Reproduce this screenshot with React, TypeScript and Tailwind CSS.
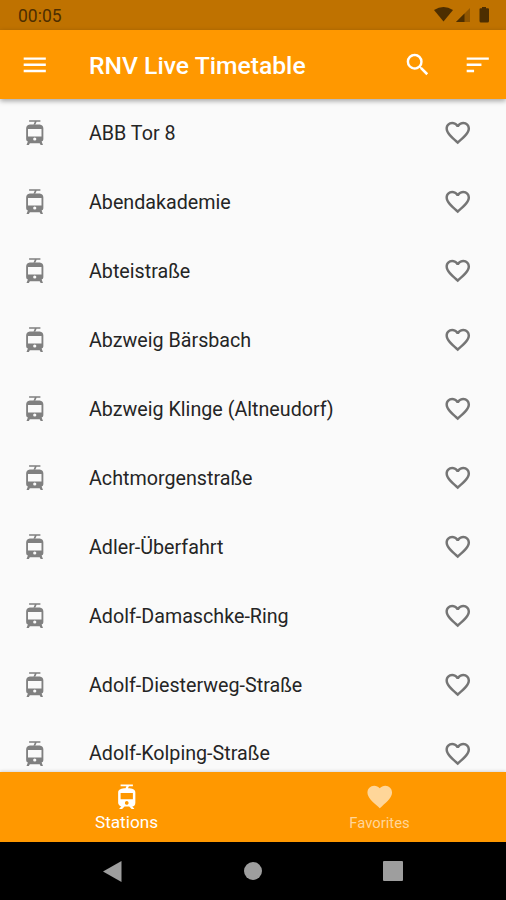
import { useState } from 'react';
import clsx from 'clsx';
import { MdFavorite, MdFavoriteBorder, MdMenu, MdSearch, MdSort, MdTram } from 'react-icons/md';

const stations = [
  'ABB Tor 8',
  'Abendakademie',
  'Abteistraße',
  'Abzweig Bärsbach',
  'Abzweig Klinge (Altneudorf)',
  'Achtmorgenstraße',
  'Adler-Überfahrt',
  'Adolf-Damaschke-Ring',
  'Adolf-Diesterweg-Straße',
  'Adolf-Kolping-Straße',
];

function StatusBar() {
  return (
    <div className="flex h-[30px] shrink-0 items-center justify-between bg-[#bf7200] pr-4 pl-[18px] text-[#4d2e00]">
      <span className="pt-[3px] text-[17.5px] leading-none">00:05</span>
      <svg width="56" height="16" viewBox="0 0 56 16" fill="currentColor">
        <path d="M0 3Q9.5-3 19 3L9.5 14.5Z" />
        <path d="M22 15 36 1v14Z" opacity="0.4" />
        <path d="M22 15 30.5 6.5V15Z" />
        <path d="M48 1.2V0h4v1.2h2q1 0 1 1V14q0 1.5-1.5 1.5h-6.5Q45.5 15.5 45.5 14V2.2q0-1 1-1Z" />
      </svg>
    </div>
  );
}

// Tram front with a wide windscreen
function TramIcon({ className }: { className?: string }) {
  return (
    <svg viewBox="0 0 24 24" fill="currentColor" className={className}>
      <path d="M7.4 1.9h9.2v1.2h-3.1l-1.1 2.4h-1.5l1.1-2.4H7.4Z" />
      <path
        fillRule="evenodd"
        d="M8 5.2h8q3 .3 3 3.3v8.7q0 1.500-1.400 1.900l1.100 2.900h-1.900l-.8-1.500H8l-.8 1.500H5.300l1.100-2.900Q5 18.700 5 17.200V8.500q0-3 3-3.300ZM6.500 9v6h11V9ZM12 15.800a1.300 1.300 0 1 0 0 2.600 1.300 1.300 0 1 0 0-2.600Z"
      />
    </svg>
  );
}

function StationRow({ name }: { name: string }) {
  return (
    <li className="flex h-[68.9px] shrink-0 items-center pr-[34px] pl-5">
      <TramIcon className="size-[29.5px] text-[#808080]" />
      <span className="ml-[39.5px] flex-1 pt-[2px] text-[19.7px] leading-none text-[#252525]">{name}</span>
      <button aria-label={`Add ${name} to favorites`}>
        <MdFavoriteBorder className="size-[29.5px] text-[#757575]" />
      </button>
    </li>
  );
}

export default function App() {
  const [tab, setTab] = useState<'stations' | 'favorites'>('stations');

  return (
    <div className="flex h-[900px] w-[506px] flex-col overflow-hidden bg-[#fafafa] font-['Roboto',sans-serif]">
      <StatusBar />
      <header className="z-10 flex h-[68.5px] shrink-0 items-center bg-[#ff9800] pr-[14px] pl-5 text-white shadow-[0_2px_5px_rgba(0,0,0,0.35)]">
        <MdMenu className="size-[29.5px]" />
        <h1 className="ml-[39.5px] flex-1 pt-[4px] text-[24.7px] leading-none font-medium">RNV Live Timetable</h1>
        <MdSearch className="size-[29.5px]" />
        <MdSort className="ml-[30px] size-[29.5px]" />
      </header>

      <ul className="flex min-h-0 flex-1 flex-col overflow-hidden pt-[0.3px]">
        {stations.map((name) => (
          <StationRow key={name} name={name} />
        ))}
      </ul>

      <nav className="z-10 grid h-[70px] shrink-0 grid-cols-2 bg-[#ff9800] shadow-[0_-1px_3px_rgba(0,0,0,0.15)]">
        <button
          onClick={() => setTab('stations')}
          className={clsx('flex flex-col items-center pt-[10px]', tab === 'stations' ? 'text-white' : 'text-[#ffd699]')}
        >
          <MdTram className="size-[29.5px]" />
          <span className={clsx('leading-5', tab === 'stations' ? 'text-[17.2px]' : 'text-[14.8px]')}>
            Stations
          </span>
        </button>
        <button
          onClick={() => setTab('favorites')}
          className={clsx('flex flex-col items-center pt-[10px]', tab === 'favorites' ? 'text-white' : 'text-[#ffd699]')}
        >
          <MdFavorite className="size-[29.5px]" />
          <span className={clsx('mt-px leading-5', tab === 'favorites' ? 'text-[17.2px]' : 'text-[14.8px]')}>
            Favorites
          </span>
        </button>
      </nav>

      <div className="flex h-[58px] shrink-0 items-center bg-black pl-[103px] text-[#9e9e9e]">
        <svg width="19" height="21" viewBox="0 0 19 21" fill="currentColor">
          <path d="M0 10.5 18.5 0v21Z" />
        </svg>
        <div className="ml-[122px] size-[18px] rounded-full bg-current" />
        <div className="ml-[121px] size-[20px] rounded-[1px] bg-current" />
      </div>
    </div>
  );
}
